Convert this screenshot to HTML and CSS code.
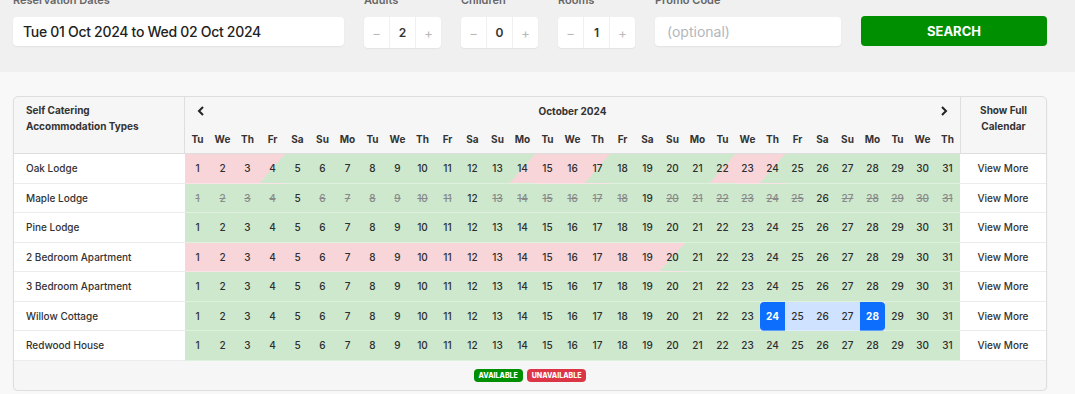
FILE: index.html
```html
<!DOCTYPE html>
<html lang="en">
<head>
  <meta charset="UTF-8">
  <meta name="viewport" content="width=device-width, initial-scale=1.0">
  <title>Availability Calendar</title>
  <link rel="stylesheet" href="styles.css">
</head>
<body>

  <div class="search-bar">
    <div class="field">
      <label>Reservation Dates</label>
      <div class="date-input">Tue 01 Oct 2024 to Wed 02 Oct 2024</div>
    </div>
    <div class="field">
      <label>Adults</label>
      <div class="stepper"><span class="step">&minus;</span><span class="count">2</span><span class="step">+</span></div>
    </div>
    <div class="field">
      <label>Children</label>
      <div class="stepper"><span class="step">&minus;</span><span class="count">0</span><span class="step">+</span></div>
    </div>
    <div class="field">
      <label>Rooms</label>
      <div class="stepper"><span class="step">&minus;</span><span class="count">1</span><span class="step">+</span></div>
    </div>
    <div class="field">
      <label>Promo Code</label>
      <div class="promo">(optional)</div>
    </div>
    <button class="search-btn">SEARCH</button>
  </div>

  <div class="card">
    <div class="cal">
      <div class="corner">Self Catering<br>Accommodation Types</div>
      <div class="month">
        <svg width="8" height="10" viewBox="0 0 8 10"><path d="M6 1 L2 5 L6 9" fill="none" stroke="#222" stroke-width="2"/></svg>
        <span>October 2024</span>
        <svg width="8" height="10" viewBox="0 0 8 10"><path d="M2 1 L6 5 L2 9" fill="none" stroke="#222" stroke-width="2"/></svg>
      </div>
      <div class="full">Show Full<br>Calendar</div>

      <span class="dn">Tu</span><span class="dn">We</span><span class="dn">Th</span><span class="dn">Fr</span><span class="dn">Sa</span><span class="dn">Su</span><span class="dn">Mo</span>
      <span class="dn">Tu</span><span class="dn">We</span><span class="dn">Th</span><span class="dn">Fr</span><span class="dn">Sa</span><span class="dn">Su</span><span class="dn">Mo</span>
      <span class="dn">Tu</span><span class="dn">We</span><span class="dn">Th</span><span class="dn">Fr</span><span class="dn">Sa</span><span class="dn">Su</span><span class="dn">Mo</span>
      <span class="dn">Tu</span><span class="dn">We</span><span class="dn">Th</span><span class="dn">Fr</span><span class="dn">Sa</span><span class="dn">Su</span><span class="dn">Mo</span>
      <span class="dn">Tu</span><span class="dn">We</span><span class="dn">Th</span>

      <!-- Oak Lodge -->
      <div class="name">Oak Lodge</div>
      <span class="d r">1</span><span class="d r">2</span><span class="d r">3</span><span class="d ro">4</span><span class="d">5</span><span class="d">6</span><span class="d">7</span>
      <span class="d">8</span><span class="d">9</span><span class="d">10</span><span class="d">11</span><span class="d">12</span><span class="d">13</span><span class="d ri">14</span>
      <span class="d r">15</span><span class="d r">16</span><span class="d ro">17</span><span class="d">18</span><span class="d">19</span><span class="d">20</span><span class="d">21</span>
      <span class="d ri">22</span><span class="d r">23</span><span class="d ro">24</span><span class="d">25</span><span class="d">26</span><span class="d">27</span><span class="d">28</span>
      <span class="d">29</span><span class="d">30</span><span class="d">31</span>
      <div class="more">View More</div>

      <!-- Maple Lodge -->
      <div class="name">Maple Lodge</div>
      <span class="d x">1</span><span class="d x">2</span><span class="d x">3</span><span class="d x">4</span><span class="d">5</span><span class="d x">6</span><span class="d x">7</span>
      <span class="d x">8</span><span class="d x">9</span><span class="d x">10</span><span class="d x">11</span><span class="d">12</span><span class="d x">13</span><span class="d x">14</span>
      <span class="d x">15</span><span class="d x">16</span><span class="d x">17</span><span class="d x">18</span><span class="d">19</span><span class="d x">20</span><span class="d x">21</span>
      <span class="d x">22</span><span class="d x">23</span><span class="d x">24</span><span class="d x">25</span><span class="d">26</span><span class="d x">27</span><span class="d x">28</span>
      <span class="d x">29</span><span class="d x">30</span><span class="d x">31</span>
      <div class="more">View More</div>

      <!-- Pine Lodge -->
      <div class="name">Pine Lodge</div>
      <span class="d">1</span><span class="d">2</span><span class="d">3</span><span class="d">4</span><span class="d">5</span><span class="d">6</span><span class="d">7</span>
      <span class="d">8</span><span class="d">9</span><span class="d">10</span><span class="d">11</span><span class="d">12</span><span class="d">13</span><span class="d">14</span>
      <span class="d">15</span><span class="d">16</span><span class="d">17</span><span class="d">18</span><span class="d">19</span><span class="d">20</span><span class="d">21</span>
      <span class="d">22</span><span class="d">23</span><span class="d">24</span><span class="d">25</span><span class="d">26</span><span class="d">27</span><span class="d">28</span>
      <span class="d">29</span><span class="d">30</span><span class="d">31</span>
      <div class="more">View More</div>

      <!-- 2 Bedroom Apartment -->
      <div class="name">2 Bedroom Apartment</div>
      <span class="d r">1</span><span class="d r">2</span><span class="d r">3</span><span class="d r">4</span><span class="d r">5</span><span class="d r">6</span><span class="d r">7</span>
      <span class="d r">8</span><span class="d r">9</span><span class="d r">10</span><span class="d r">11</span><span class="d r">12</span><span class="d r">13</span><span class="d r">14</span>
      <span class="d r">15</span><span class="d r">16</span><span class="d r">17</span><span class="d r">18</span><span class="d r">19</span><span class="d ro">20</span><span class="d">21</span>
      <span class="d">22</span><span class="d">23</span><span class="d">24</span><span class="d">25</span><span class="d">26</span><span class="d">27</span><span class="d">28</span>
      <span class="d">29</span><span class="d">30</span><span class="d">31</span>
      <div class="more">View More</div>

      <!-- 3 Bedroom Apartment -->
      <div class="name">3 Bedroom Apartment</div>
      <span class="d">1</span><span class="d">2</span><span class="d">3</span><span class="d">4</span><span class="d">5</span><span class="d">6</span><span class="d">7</span>
      <span class="d">8</span><span class="d">9</span><span class="d">10</span><span class="d">11</span><span class="d">12</span><span class="d">13</span><span class="d">14</span>
      <span class="d">15</span><span class="d">16</span><span class="d">17</span><span class="d">18</span><span class="d">19</span><span class="d">20</span><span class="d">21</span>
      <span class="d">22</span><span class="d">23</span><span class="d">24</span><span class="d">25</span><span class="d">26</span><span class="d">27</span><span class="d">28</span>
      <span class="d">29</span><span class="d">30</span><span class="d">31</span>
      <div class="more">View More</div>

      <!-- Willow Cottage -->
      <div class="name">Willow Cottage</div>
      <span class="d">1</span><span class="d">2</span><span class="d">3</span><span class="d">4</span><span class="d">5</span><span class="d">6</span><span class="d">7</span>
      <span class="d">8</span><span class="d">9</span><span class="d">10</span><span class="d">11</span><span class="d">12</span><span class="d">13</span><span class="d">14</span>
      <span class="d">15</span><span class="d">16</span><span class="d">17</span><span class="d">18</span><span class="d">19</span><span class="d">20</span><span class="d">21</span>
      <span class="d">22</span><span class="d">23</span><span class="d sel first">24</span><span class="d rng">25</span><span class="d rng">26</span><span class="d rng">27</span><span class="d sel last">28</span>
      <span class="d">29</span><span class="d">30</span><span class="d">31</span>
      <div class="more">View More</div>

      <!-- Redwood House -->
      <div class="name">Redwood House</div>
      <span class="d">1</span><span class="d">2</span><span class="d">3</span><span class="d">4</span><span class="d">5</span><span class="d">6</span><span class="d">7</span>
      <span class="d">8</span><span class="d">9</span><span class="d">10</span><span class="d">11</span><span class="d">12</span><span class="d">13</span><span class="d">14</span>
      <span class="d">15</span><span class="d">16</span><span class="d">17</span><span class="d">18</span><span class="d">19</span><span class="d">20</span><span class="d">21</span>
      <span class="d">22</span><span class="d">23</span><span class="d">24</span><span class="d">25</span><span class="d">26</span><span class="d">27</span><span class="d">28</span>
      <span class="d">29</span><span class="d">30</span><span class="d">31</span>
      <div class="more">View More</div>
    </div>

    <div class="legend">
      <span class="badge ok">Available</span>
      <span class="badge no">Unavailable</span>
    </div>
  </div>

</body>
</html>
```

FILE: styles.css
```css
body {
  margin: 0;
  font-family: Inter, "DejaVu Sans", sans-serif;
  background-color: #f8f8f8;
  color: #2a2a2a;
}

/* search form */
.search-bar {
  display: flex;
  align-items: flex-start;
  gap: 20px;
  height: 72px;
  padding: 0 13px;
  background-color: #f0f0f0;
}

.field {
  display: flex;
  flex-direction: column;
  margin-top: -6px;
}

.field label {
  font-size: 11px;
  font-weight: 600;
  color: #666;
  height: 12px;
  line-height: 12px;
  margin-bottom: 11px;
}

.date-input,
.promo {
  height: 29px;
  line-height: 29px;
  background-color: #fff;
  border-radius: 4px;
  box-shadow: 0 1px 2px rgba(0, 0, 0, 0.06);
  font-size: 14px;
  font-weight: 500;
}

.date-input {
  width: 331px;
  padding-left: 10px;
  box-sizing: border-box;
  color: #222;
  letter-spacing: -0.3px;
}

.promo {
  width: 186px;
  padding-left: 12px;
  box-sizing: border-box;
  color: #b2b6bd;
  font-weight: 400;
}

.stepper {
  display: flex;
  width: 77px;
  height: 31px;
  background-color: #fff;
  border-radius: 4px;
  box-shadow: 0 1px 2px rgba(0, 0, 0, 0.06);
}

.stepper span {
  flex: 1;
  display: flex;
  align-items: center;
  justify-content: center;
}

.stepper .count {
  border-left: 1px solid #f0f0f0;
  border-right: 1px solid #f0f0f0;
  font-size: 12px;
  font-weight: 600;
  color: #333;
}

.stepper .step {
  font-size: 13px;
  color: #b8b8b8;
}

.search-btn {
  width: 186px;
  height: 30px;
  margin-top: 16px;
  border: none;
  border-radius: 4px;
  background-color: #008f00;
  color: #fff;
  font-family: inherit;
  font-size: 13px;
  font-weight: 700;
}

/* calendar card */
.card {
  width: 1034px;
  box-sizing: border-box;
  margin: 24px 0 0 13px;
  border: 1px solid #dedede;
  border-radius: 5px;
  background-color: #f6f6f6;
  box-shadow: 0 1px 2px rgba(0, 0, 0, 0.05);
  overflow: hidden;
}

.cal {
  display: grid;
  grid-template-columns: 171px repeat(31, 25px) 86px;
  grid-template-rows: 28px 29px repeat(7, 29.5px);
  font-size: 10px;
}

.corner,
.full {
  grid-row: span 2;
  box-sizing: border-box;
  padding-top: 5px;
  line-height: 16px;
  font-weight: 700;
  color: #333;
  border-bottom: 1px solid #dedede;
}

.corner {
  padding-left: 12px;
  border-right: 1px solid #dedede;
}

.full {
  text-align: center;
  border-left: 1px solid #dedede;
}

.month {
  grid-column: span 31;
  display: flex;
  align-items: center;
  justify-content: space-between;
  padding: 0 12px 0 12px;
  font-weight: 700;
  color: #333;
}

.dn {
  display: flex;
  align-items: center;
  justify-content: center;
  font-weight: 700;
  color: #333;
  border-bottom: 1px solid #dedede;
}

.name,
.more {
  display: flex;
  align-items: center;
  background-color: #fff;
  border-bottom: 1px solid #ececec;
  font-weight: 500;
  color: #333;
}

.name {
  padding-left: 12px;
}

.more {
  justify-content: center;
}

.d {
  display: flex;
  align-items: center;
  justify-content: center;
  background-color: #cde8cd;
  border-bottom: 1px solid rgba(255, 255, 255, 0.35);
  font-weight: 500;
  color: #2e2e2e;
}

.d.r {
  background-color: #f7d5d9;
}

/* checkout day: morning booked */
.d.ro {
  background: linear-gradient(to bottom right, #f7d5d9 50%, #cde8cd 50%);
}

/* check-in day: afternoon booked */
.d.ri {
  background: linear-gradient(to bottom right, #cde8cd 50%, #f7d5d9 50%);
}

.d.x {
  color: #8a8a8a;
  text-decoration: line-through;
}

.d.sel {
  background-color: #0d6efd;
  color: #fff;
  font-weight: 700;
}

.d.first {
  border-radius: 4px 0 0 4px;
}

.d.last {
  border-radius: 0 4px 4px 0;
}

.d.rng {
  background-color: #cfe2ff;
}

.legend {
  display: flex;
  justify-content: center;
  align-items: center;
  gap: 4px;
  height: 29px;
}

.badge {
  padding: 2px 5px;
  border-radius: 4px;
  font-size: 7px;
  font-weight: 800;
  text-transform: uppercase;
  color: #fff;
}

.badge.ok {
  background-color: #008f00;
}

.badge.no {
  background-color: #dc3545;
}
```
